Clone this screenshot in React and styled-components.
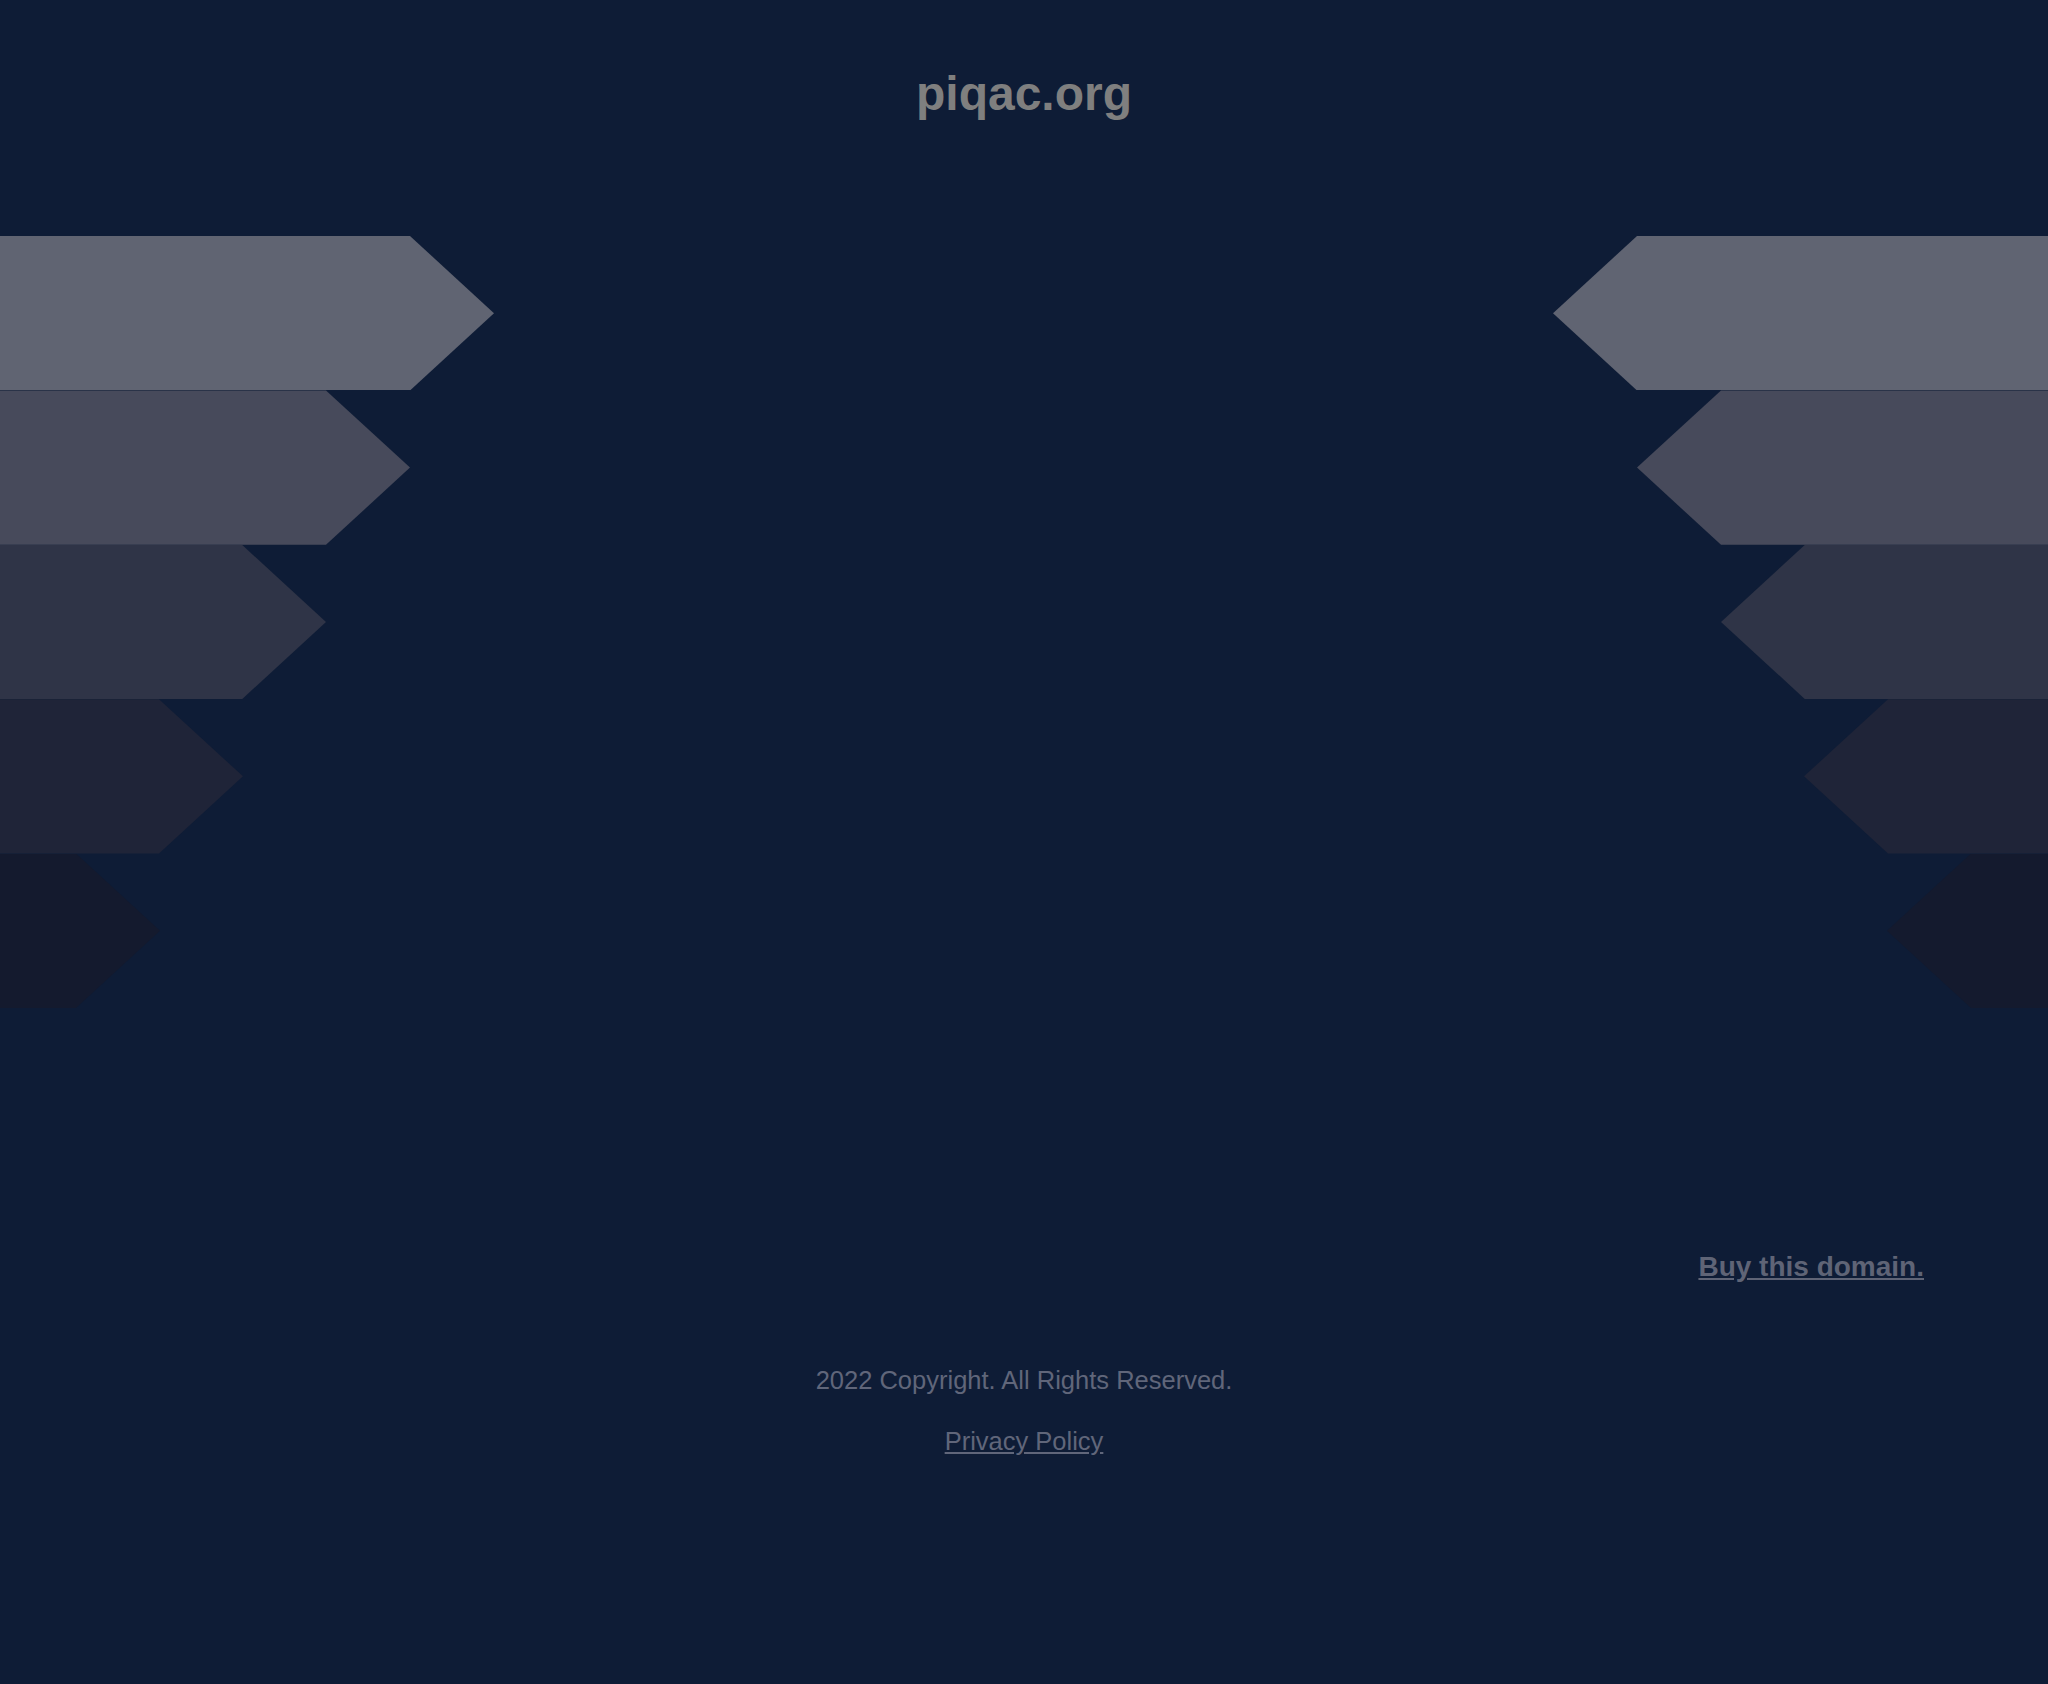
import React from 'react';
import styled, { createGlobalStyle } from 'styled-components';

const GlobalStyle = createGlobalStyle`
  html, body {
    margin: 0;
    padding: 0;
    background: #0e1c36;
  }
  body {
    font-family: "Liberation Sans", Arial, Helvetica, sans-serif;
  }
`;

const Page = styled.div`
  min-height: 1684px;
  background: #0e1c36;
  display: flex;
  flex-direction: column;
`;

const Header = styled.header`
  height: 236px;
  box-sizing: border-box;
  padding-top: 66px;
  display: flex;
  justify-content: center;
  align-items: flex-start;
`;

const Title = styled.h1`
  margin: 0;
  font-size: 48px;
  font-weight: 700;
  color: #7f7f7f;
  line-height: normal;
`;

const Stage = styled.section`
  display: flex;
  justify-content: space-between;
`;

const Stack = styled.div`
  display: flex;
  flex-direction: column;
  align-items: ${({ side }) => (side === 'right' ? 'flex-end' : 'flex-start')};
`;

const Bar = styled.div`
  height: 154.4px;
  width: ${({ size }) => size}px;
  background: ${({ shade }) => shade};
  clip-path: ${({ side }) =>
    side === 'right'
      ? 'polygon(84px 0, 100% 0, 100% 100%, 84px 100%, 0 50%)'
      : 'polygon(0 0, calc(100% - 84px) 0, 100% 50%, calc(100% - 84px) 100%, 0 100%)'};
`;

const BuyRow = styled.div`
  display: flex;
  justify-content: flex-end;
  padding: 243px 124px 0 0;
`;

const BuyLink = styled.a`
  font-size: 28px;
  font-weight: 700;
  color: #5f6476;
  text-decoration: underline;
  line-height: normal;
`;

const Footer = styled.footer`
  display: flex;
  flex-direction: column;
  align-items: center;
  padding-top: 83px;
  gap: 32px;
`;

const Copy = styled.p`
  margin: 0;
  font-size: 25.5px;
  color: #60667a;
  line-height: normal;
`;

const PolicyLink = styled.a`
  font-size: 25.5px;
  color: #60667a;
  text-decoration: underline;
  line-height: normal;
`;

const bars = [
  { left: 494, right: 495, shade: '#606472' },
  { left: 410, right: 411, shade: '#474a5b' },
  { left: 326, right: 327, shade: '#2f3447' },
  { left: 243, right: 244, shade: '#1f2438' },
  { left: 160, right: 161, shade: '#141a2e' },
];

const App = () => {
  return (
    <>
      <GlobalStyle />
      <Page>
        <Header>
          <Title>piqac.org</Title>
        </Header>
        <Stage>
          <Stack side='left'>
            {bars.map((b, i) => <Bar key={i} side='left' size={b.left} shade={b.shade} />)}
          </Stack>
          <Stack side='right'>
            {bars.map((b, i) => <Bar key={i} side='right' size={b.right} shade={b.shade} />)}
          </Stack>
        </Stage>
        <BuyRow>
          <BuyLink href='#'>Buy this domain.</BuyLink>
        </BuyRow>
        <Footer>
          <Copy>2022 Copyright. All Rights Reserved.</Copy>
          <PolicyLink href='#'>Privacy Policy</PolicyLink>
        </Footer>
      </Page>
    </>
  );
};

export default App;
